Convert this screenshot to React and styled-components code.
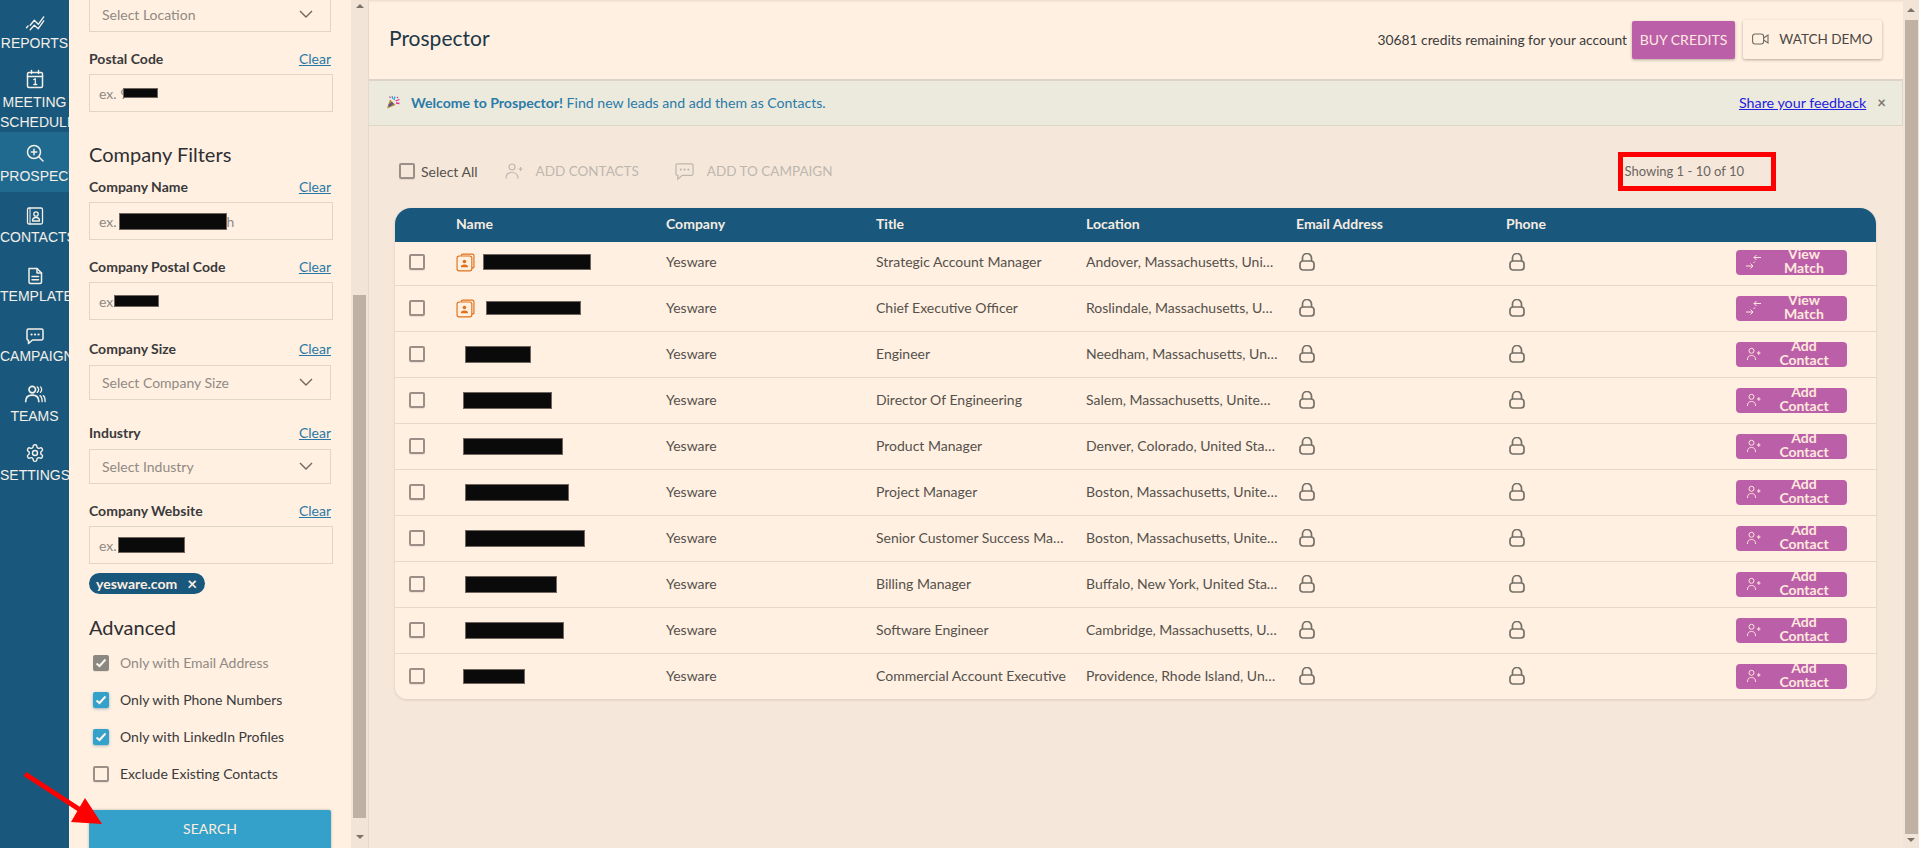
import React from "react";
import styled, { createGlobalStyle } from "styled-components";

const FONT = `"Lato", "Open Sans", "Liberation Sans", sans-serif`;
const CREAM = "#fff0e1";

const Global = createGlobalStyle`
  html, body { margin: 0; padding: 0; height: 100%; overflow: hidden; background: ${CREAM}; }
  body { font-family: ${FONT}; font-size: 14px; color: #3b3b3b; }
  * { box-sizing: border-box; }
`;

const Page = styled.div`
  position: relative;
  display: flex;
  height: 848px;
  width: 1919px;
  overflow: hidden;
`;

/* ---- nav ---- */
const Nav = styled.nav`
  width: 69px;
  flex: none;
  background: #19587c;
  padding-top: 2px;
  overflow: hidden;
`;
const NavItem = styled.a`
  display: flex;
  flex-direction: column;
  align-items: center;
  height: ${(p) => p.$h}px;
  padding-top: ${(p) => p.$pt}px;
  background: ${(p) => (p.$active ? "#206a90" : "transparent")};
  color: #f4efe8;
  overflow: hidden;
  svg { flex: none; margin-bottom: ${(p) => p.$gap}px; }
`;
const NavLabel = styled.span`
  display: block;
  width: 69px;
  font-family: "Liberation Sans", Arial, sans-serif;
  font-size: 14px;
  line-height: 20px;
  text-align: center;
  white-space: normal;
  span { display: block; white-space: nowrap; }
`;

/* ---- filter panel ---- */
const Panel = styled.aside`
  width: 282px;
  flex: none;
  background: ${CREAM};
  overflow: hidden;
  padding: 0 18px 0 20px;
`;
const Form = styled.div`
  margin-top: -3px;
  display: flex;
  flex-direction: column;
`;
const Field = styled.div`
  margin-top: ${(p) => p.$top || 0}px;
`;
const LabelRow = styled.div`
  display: flex;
  justify-content: space-between;
  align-items: center;
  height: 18px;
  padding-bottom: 2px;
  width: 242px;
  margin-bottom: ${(p) => p.$mb || 6}px;
`;
const Label = styled.span`
  font-size: 14px;
  font-weight: 700;
  color: #3a3a3c;
`;
const Clear = styled.a`
  font-size: 14px;
  color: #2b78a6;
  text-decoration: underline;
`;
const InputBox = styled.div`
  display: flex;
  align-items: center;
  width: 244px;
  height: 38px;
  border: 1px solid #e0d5c9;
  padding: 0 9px;
  color: #8f8a84;
  font-size: 14px;
`;
const SelectBox = styled.div`
  display: flex;
  align-items: center;
  justify-content: space-between;
  width: 242px;
  height: 35px;
  border: 1px solid #e0d5c9;
  padding: 0 16px 1px 12px;
  color: #8f8a84;
  font-size: 14px;
`;
const Redact = styled.i`
  display: inline-block;
  flex: none;
  background: #0a0a0a;
  border: 1px solid #6e665f;
  width: ${(p) => p.$w}px;
  height: ${(p) => p.$h}px;
  margin-left: ${(p) => p.$ml || 0}px;
`;
const SectionTitle = styled.h3`
  margin: ${(p) => p.$top}px 0 ${(p) => p.$bottom}px;
  font-size: 20px;
  line-height: 26px;
  font-weight: 400;
  color: #2f2f31;
`;
const Chip = styled.div`
  display: inline-flex;
  align-items: center;
  gap: 10px;
  height: 21px;
  margin-top: 9px;
  padding: 0 8px 0 7px;
  border-radius: 11px;
  background: #19587c;
  color: #ffeee0;
  font-size: 14px;
  font-weight: 700;
  align-self: flex-start;
  white-space: nowrap;
`;
const ChipClose = styled.span`
  font-size: 17px;
  line-height: 17px;
`;
const CheckRow = styled.label`
  display: flex;
  align-items: center;
  gap: 11px;
  height: 37px;
  padding-left: 4px;
  color: ${(p) => (p.$muted ? "#8f8a84" : "#3a3a3c")};
  font-size: 14px;
`;
const Box = styled.span`
  display: inline-flex;
  align-items: center;
  justify-content: center;
  flex: none;
  width: 16px;
  height: 16px;
  border-radius: 2px;
  border: ${(p) => (p.$kind ? "none" : "2px solid #9a9087")};
  background: ${(p) => (p.$kind === "on" ? "#33a1c9" : p.$kind === "off" ? "#8a8880" : "transparent")};
  box-shadow: ${(p) => (p.$kind === "on" ? "0 1px 3px rgba(40,110,150,.45)" : "0 1px 1px rgba(0,0,0,.08)")};
`;
const SearchButton = styled.button`
  width: 242px;
  height: 60px;
  flex: none;
  margin-top: 18px;
  padding: 0 0 23px;
  border: none;
  border-radius: 2px;
  background: #33a1c9;
  color: #ffeee0;
  font-family: ${FONT};
  font-size: 14px;
  box-shadow: 0 0 3px rgba(0,0,0,.25);
`;

/* ---- scrollbars ---- */
const Track = styled.div`
  width: ${(p) => p.$w}px;
  flex: none;
  display: flex;
  flex-direction: column;
  align-items: center;
  background: #f3e4d8;
  height: 848px;
`;
const ArrowCell = styled.div`
  height: ${(p) => p.$h}px;
  flex: none;
  display: flex;
  justify-content: center;
  align-items: ${(p) => (p.$down ? "flex-start" : "center")};
  padding-top: ${(p) => (p.$down ? 4 : 0)}px;
  color: #6f6860;
  font-size: 0;
`;
const Tri = styled.i`
  width: 0;
  height: 0;
  border-left: 4px solid transparent;
  border-right: 4px solid transparent;
  ${(p) => (p.$down ? "border-top: 4px solid #7a7269;" : "border-bottom: 4px solid #7a7269;")}
`;
const Thumb = styled.div`
  width: 13px;
  flex: none;
  height: ${(p) => p.$h}px;
  margin-top: ${(p) => p.$top}px;
  background: #bfb2a5;
`;
const TrackFill = styled.div`
  flex: 1;
`;

/* ---- main ---- */
const Main = styled.main`
  flex: 1;
  min-width: 0;
  display: flex;
  flex-direction: column;
  background: #f6e7db;
  border-left: 1px solid #e6d8cb;
`;
const TopBar = styled.header`
  height: 81px;
  flex: none;
  display: flex;
  align-items: center;
  justify-content: space-between;
  padding: 0 21px 0 20px;
  background: ${CREAM};
  border-bottom: 2px solid #dcd3c9;
  box-shadow: inset 0 3px 3px -2px rgba(0,0,0,.1);
`;
const PageTitle = styled.h1`
  margin: 0 0 4px;
  font-size: 21px;
  font-weight: 400;
  color: #1e3747;
`;
const TopRight = styled.div`
  display: flex;
  align-items: center;
`;
const Credits = styled.span`
  font-size: 13.8px;
  color: #3b3b3b;
  margin: 0 5px 1px 0;
`;
const BuyButton = styled.button`
  height: 38px;
  width: 103px;
  padding: 0 0 1px;
  border: none;
  border-radius: 2px;
  background: #bc5fa9;
  color: #ffe9e0;
  font-family: ${FONT};
  font-size: 14px;
  white-space: nowrap;
  box-shadow: 0 1px 3px rgba(0,0,0,.3);
  margin-right: 8px;
`;
const DemoButton = styled.button`
  height: 39px;
  width: 139px;
  display: flex;
  align-items: center;
  justify-content: center;
  gap: 10px;
  padding: 0 0 2px;
  border: none;
  border-radius: 2px;
  background: ${CREAM};
  color: #4a4642;
  font-family: ${FONT};
  font-size: 13.5px;
  white-space: nowrap;
  box-shadow: 0 1px 3px rgba(0,0,0,.3);
`;
const Banner = styled.div`
  height: 45px;
  flex: none;
  display: flex;
  align-items: center;
  padding: 0 16px 2px 17px;
  background: #ece9dd;
  border-bottom: 1px solid #dcd6cb;
  border-right: 1px solid #dcd6cb;
  color: #2a7ba8;
  font-size: 14.1px;
`;
const BannerText = styled.span`
  margin-left: 11px;
  flex: 1;
  b { font-weight: 700; }
`;
const Feedback = styled.a`
  color: #2222dd;
  font-size: 14.3px;
  text-decoration: underline;
  margin-right: 11px;
`;
const Close = styled.span`
  color: #7d7870;
  font-size: 15px;
  font-weight: 700;
`;
const Content = styled.section`
  flex: 1;
  padding: 0 26px 0 26px;
`;
const Toolbar = styled.div`
  display: flex;
  align-items: center;
  height: 82px;
  padding: 8px 0 0 4px;
`;
const SelectAll = styled.label`
  display: flex;
  align-items: center;
  gap: 6px;
  color: #55514c;
  font-size: 14px;
  margin-right: 27px;
`;
const GhostAction = styled.span`
  display: flex;
  align-items: center;
  gap: 13px;
  color: #bdb7ae;
  font-size: 13.5px;
  margin-right: 36px;
  white-space: nowrap;
`;
const Showing = styled.span`
  margin-left: auto;
  margin-right: 133px;
  color: #6a6660;
  font-size: 13px;
`;
const Table = styled.div`
  width: 1481px;
  background: ${CREAM};
  border-radius: 16px 16px 12px 12px;
  box-shadow: 0 1px 3px rgba(0,0,0,.12);
  overflow: hidden;
`;
const HeadRow = styled.div`
  display: grid;
  grid-template-columns: 61px repeat(6, 210px) 160px;
  align-items: center;
  height: 34px;
  padding-bottom: 3px;
  background: #19587c;
  color: #f6ece2;
  font-size: 14px;
  font-weight: 700;
`;
const Row = styled.div`
  display: grid;
  grid-template-columns: 61px repeat(6, 210px) 160px;
  align-items: center;
  height: ${(p) => (p.$first ? 43 : 46)}px;
  padding-bottom: ${(p) => (p.$first ? 3 : 1)}px;
  border-top: ${(p) => (p.$first ? "none" : "1px solid #e6d8cb")};
  color: #55514c;
  font-size: 14px;
`;
const CheckCell = styled.div`
  padding-left: 14px;
  display: flex;
`;
const NameCell = styled.div`
  display: flex;
  align-items: center;
`;
const TextCell = styled.div`
  padding-right: 18px;
  margin-bottom: 2px;
  white-space: nowrap;
  overflow: hidden;
  text-overflow: ellipsis;
`;
const LockCell = styled.div`
  padding: 0 0 0 3px;
  display: flex;
`;
const ActionCell = styled.div`
  padding-left: 20px;
  display: flex;
`;
const RowButton = styled.button`
  width: 111px;
  height: 25px;
  display: flex;
  align-items: center;
  padding: 0 2px 0 9px;
  border: none;
  border-radius: 4px;
  background: #bc5fa9;
  color: #ffe9dc;
  font-family: ${FONT};
  svg { flex: none; }
`;
const RowButtonText = styled.span`
  flex: 1;
  display: block;
  margin: -3px auto 0;
  padding: 0 12px;
  font-size: 14px;
  line-height: 14px;
  font-weight: 700;
  text-align: center;
`;

/* ---- annotations ---- */
const RedBox = styled.div`
  position: absolute;
  left: 1618px;
  top: 152px;
  width: 158px;
  height: 39px;
  border: 5px solid #ff0000;
  pointer-events: none;
`;
const Overlay = styled.svg`
  position: absolute;
  left: 0;
  top: 760px;
  pointer-events: none;
`;

/* ---- icons ---- */
const stroke = { fill: "none", stroke: "currentColor", strokeWidth: 1.5, strokeLinecap: "round", strokeLinejoin: "round" };
const Ic = ({ size = 20, children, sw }) => (
  <svg width={size} height={size} viewBox="0 0 20 20" {...stroke} strokeWidth={sw || 1.5}>{children}</svg>
);
const IReports = () => (
  <Ic size={20} sw={1.4}>
    <path d="M1.5 14.7 L3 13" />
    <path d="M5.2 12.3 L9.3 7.3 L13.3 11.3 L18.7 3.9" />
    <path d="M5.2 16.7 L9.3 12.3 L13.3 15.7 L18.7 7.9" />
  </Ic>
);
const ICal = () => (
  <Ic>
    <rect x="2.5" y="3.5" width="15" height="15" rx="1.5" /><path d="M2.5 7.5H17.5M6.5 1.5V4.5M13.5 1.5V4.5" />
    <path d="M8.8 10.5 L10.3 9.8 V15.5M8.8 15.5H11.8" strokeWidth="1.3" />
  </Ic>
);
const IZoom = () => (
  <Ic><circle cx="9" cy="9" r="6.5" /><path d="M14 14 L18 18M9 6.3V11.7M6.3 9H11.7" /></Ic>
);
const IContact = () => (
  <Ic sw={1.3}>
    <rect x="2.5" y="2" width="15" height="16" rx="1.5" /><path d="M5 2V18" strokeWidth="1" />
    <circle cx="11" cy="8" r="2.2" /><path d="M7.5 15 C7.5 12 9 11.5 11 11.5 S14.5 12 14.5 15 Z" />
  </Ic>
);
const IDoc = () => (
  <Ic>
    <path d="M4 2.5 H12 L16.5 7 V16 A1.5 1.5 0 0 1 15 17.5 H5.5 A1.5 1.5 0 0 1 4 16 Z" /><path d="M12 2.5V7H16.5M7 10.5H13.5M7 13.8H13.5" />
  </Ic>
);
const IChat = () => (
  <Ic>
    <path d="M3.5 3 H16.5 A1.5 1.5 0 0 1 18 4.5 V12.5 A1.5 1.5 0 0 1 16.5 14 H7.5 L3.5 17.5 V14.2 A1.5 1.5 0 0 1 2 12.5 V4.5 A1.5 1.5 0 0 1 3.5 3 Z" />
    <path d="M6.5 8.5H6.6M10 8.5H10.1M13.5 8.5H13.6" strokeWidth="2.2" />
  </Ic>
);
const ITeam = () => (
  <Ic size={22}>
    <circle cx="7.5" cy="6" r="3" /><path d="M1.5 17 C1.5 12.5 4 11 7.5 11 S13.5 12.5 13.5 17" />
    <path d="M12 3.5 A3 3 0 0 1 12 8.5M15 3.5 A3.5 3.5 0 0 1 15 8.5M14.5 11.5 C16 12.5 16.5 14.5 16.5 17M17.5 11.5 C19 12.5 19.2 14.5 19.2 17" strokeWidth="1.2" />
  </Ic>
);
const IGear = () => (
  <svg width="20" height="20" viewBox="0 0 24 24" {...stroke} strokeWidth="1.7">
    <path d="M12.22 2h-.44a2 2 0 0 0-2 2v.18a2 2 0 0 1-1 1.73l-.43.25a2 2 0 0 1-2 0l-.15-.08a2 2 0 0 0-2.73.73l-.22.38a2 2 0 0 0 .73 2.73l.15.1a2 2 0 0 1 1 1.72v.51a2 2 0 0 1-1 1.74l-.15.09a2 2 0 0 0-.73 2.73l.22.38a2 2 0 0 0 2.73.73l.15-.08a2 2 0 0 1 2 0l.43.25a2 2 0 0 1 1 1.73V20a2 2 0 0 0 2 2h.44a2 2 0 0 0 2-2v-.18a2 2 0 0 1 1-1.73l.43-.25a2 2 0 0 1 2 0l.15.08a2 2 0 0 0 2.73-.73l.22-.39a2 2 0 0 0-.73-2.73l-.15-.08a2 2 0 0 1-1-1.74v-.5a2 2 0 0 1 1-1.74l.15-.09a2 2 0 0 0 .73-2.73l-.22-.38a2 2 0 0 0-2.73-.73l-.15.08a2 2 0 0 1-2 0l-.43-.25a2 2 0 0 1-1-1.73V4a2 2 0 0 0-2-2z" />
    <circle cx="12" cy="12" r="3" />
  </svg>
);
const Chevron = () => (
  <svg width="16" height="10" viewBox="0 0 16 10" fill="none" stroke="#6d6760" strokeWidth="1.4"><path d="M2 2 L8 8 L14 2" /></svg>
);
const Check = () => (
  <svg width="12" height="10" viewBox="0 0 12 10" fill="none" stroke="#fff4ea" strokeWidth="2"><path d="M1.5 5.5 L4.5 8 L10.5 1.5" /></svg>
);
const Lock = () => (
  <svg width="16" height="18" viewBox="0 0 16 18" fill="none" stroke="#757068" strokeWidth="1.7">
    <rect x="1" y="8" width="14" height="9" rx="3" /><path d="M3.5 8 V5 A4.2 4.2 0 0 1 12.5 5 V8" />
  </svg>
);
const MatchGlyph = () => (
  <svg width="18" height="18" viewBox="0 0 18 18" fill="none" stroke="#ffe9dc" strokeWidth="1">
    <path d="M1 13 H8 M5.5 10.5 L8 13 L5.5 15.5" /><path d="M16 4.5 H9 M11.5 2 L9 4.5 L11.5 7" /><path d="M10 8.5 L8.5 10" />
  </svg>
);
const AddGlyph = () => (
  <svg width="18" height="14" viewBox="0 0 18 14" fill="none" stroke="#ffe9dc" strokeWidth="1">
    <circle cx="6.5" cy="3.8" r="2.5" /><path d="M2.5 13 C2.5 9.5 4.2 8.5 6.5 8.5 S10.5 9.5 10.5 13" /><path d="M12 6 H15.5 M13.8 4.2 V7.8" />
  </svg>
);
const PersonAdd = () => (
  <svg width="18" height="18" viewBox="0 0 18 18" fill="none" stroke="#bdb7ae" strokeWidth="1.2">
    <circle cx="7" cy="5" r="3" /><path d="M1 16.5 C1 12 3.5 10.5 7 10.5 S13 12 13 16.5" /><path d="M13.5 7 H17.5 M15.5 5 V9" />
  </svg>
);
const ChatGhost = () => (
  <svg width="19" height="19" viewBox="0 0 20 20" fill="none" stroke="#bdb7ae" strokeWidth="1.3">
    <path d="M2.5 2 H17.5 A1.5 1.5 0 0 1 19 3.5 V12.5 A1.5 1.5 0 0 1 17.5 14 H7.5 L3 18 V14 H2.5 A1.5 1.5 0 0 1 1 12.5 V3.5 A1.5 1.5 0 0 1 2.5 2 Z" />
    <path d="M6 8H6.1M10 8H10.1M14 8H14.1" strokeWidth="2.2" strokeLinecap="round" />
  </svg>
);
const Video = () => (
  <svg width="17" height="12" viewBox="0 0 17 12" fill="none" stroke="#6f6a64" strokeWidth="1.1">
    <rect x="0.6" y="1" width="11" height="10" rx="2.5" /><path d="M11.6 5 L16 2 V10 L11.6 7" />
  </svg>
);
const Cards = () => (
  <svg width="19" height="19" viewBox="0 0 18 18" fill="none" stroke="#e0701a" strokeWidth="1.1">
    <path d="M5 2.6 V2.5 A1.5 1.5 0 0 1 6.5 1 H15.5 A1.5 1.5 0 0 1 17 2.5 V12 A1.5 1.5 0 0 1 15 14" />
    <rect x="1" y="2.8" width="14" height="14.2" rx="2" />
    <circle cx="8" cy="8" r="1.7" fill="#e0701a" stroke="none" /><path d="M4.7 13.5 V12 Q8 9.6 11.3 12 V13.5 Z" fill="#e0701a" stroke="none" />
  </svg>
);
const Party = () => (
  <svg width="14" height="14" viewBox="0 0 14 14">
    <path d="M1 13.5 L4 4.5 L9.5 10 Z" fill="#b58a2c" /><path d="M2.2 10 L6 7 L7.5 9 L3 12 Z" fill="#5b4ea0" />
    <path d="M6 1 L7 4 M9 1.5 L8 5" stroke="#3aa3d8" strokeWidth="1.3" /><path d="M9.5 6 L13.5 4.5 M10 8 L13.5 8.5" stroke="#e0338e" strokeWidth="1.3" />
    <path d="M3.5 1.5 L4.5 3" stroke="#e0338e" strokeWidth="1.2" /><circle cx="11.5" cy="2.5" r=".8" fill="#e0338e" />
  </svg>
);

const navItems = [
  { icon: <IReports />, lines: ["REPORTS"], h: 56, pt: 11, gap: 0 },
  { icon: <ICal />, lines: ["MEETING", "SCHEDULER"], h: 74, pt: 11, gap: 3 },
  { icon: <IZoom />, lines: ["PROSPECTOR"], h: 60, pt: 11, gap: 3, active: true },
  { icon: <IContact />, lines: ["CONTACTS"], h: 63, pt: 14, gap: 1 },
  { icon: <IDoc />, lines: ["TEMPLATES"], h: 60, pt: 11, gap: 0 },
  { icon: <IChat />, lines: ["CAMPAIGNS"], h: 58, pt: 11, gap: 0 },
  { icon: <ITeam />, lines: ["TEAMS"], h: 59, pt: 10, gap: 1 },
  { icon: <IGear />, lines: ["SETTINGS"], h: 60, pt: 11, gap: 2 },
];

const people = [
  { title: "Strategic Account Manager", loc: "Andover, Massachusetts, United States", match: true, ml: 8, w: 108, h: 16 },
  { title: "Chief Executive Officer", loc: "Roslindale, Massachusetts, United States", match: true, ml: 11, w: 95, h: 14 },
  { title: "Engineer", loc: "Needham, Massachusetts, United States", ml: 9, w: 66, h: 17 },
  { title: "Director Of Engineering", loc: "Salem, Massachusetts, United States", ml: 7, w: 89, h: 17 },
  { title: "Product Manager", loc: "Denver, Colorado, United States", ml: 7, w: 100, h: 17 },
  { title: "Project Manager", loc: "Boston, Massachusetts, United States", ml: 9, w: 104, h: 17 },
  { title: "Senior Customer Success Manager", loc: "Boston, Massachusetts, United States", ml: 9, w: 120, h: 17 },
  { title: "Billing Manager", loc: "Buffalo, New York, United States", ml: 9, w: 92, h: 17 },
  { title: "Software Engineer", loc: "Cambridge, Massachusetts, United States", ml: 9, w: 99, h: 17 },
  { title: "Commercial Account Executive", loc: "Providence, Rhode Island, United States", ml: 7, w: 62, h: 15 },
];

const Scrollbar = ({ w, upH, top, thumb, downH }) => (
  <Track $w={w}>
    <ArrowCell $h={upH}><Tri /></ArrowCell>
    <Thumb $top={top} $h={thumb} />
    <TrackFill />
    <ArrowCell $h={downH} $down><Tri $down /></ArrowCell>
  </Track>
);

const FilterField = ({ label, top, children, mb }) => (
  <Field $top={top}>
    <LabelRow $mb={mb}><Label>{label}</Label><Clear>Clear</Clear></LabelRow>
    {children}
  </Field>
);

export default function App() {
  return (
    <Page>
      <Global />
      <Nav>
        {navItems.map((n) => (
          <NavItem key={n.lines[0]} $h={n.h} $pt={n.pt} $gap={n.gap} $active={n.active}>
            {n.icon}
            <NavLabel>{n.lines.map((l) => <span key={l}>{l}</span>)}</NavLabel>
          </NavItem>
        ))}
      </Nav>

      <Panel>
        <Form>
          <SelectBox>Select Location<Chevron /></SelectBox>
          <FilterField label="Postal Code" top={18}>
            <InputBox>ex. 9<Redact $ml={-5} $w={35} $h={10} /></InputBox>
          </FilterField>
          <SectionTitle $top={29} $bottom={11}>Company Filters</SectionTitle>
          <FilterField label="Company Name">
            <InputBox>ex.<Redact $ml={2} $w={108} $h={17} />h</InputBox>
          </FilterField>
          <FilterField label="Company Postal Code" top={18}>
            <InputBox>ex.<Redact $ml={-3} $w={45} $h={12} /></InputBox>
          </FilterField>
          <FilterField label="Company Size" top={20} mb={7}>
            <SelectBox>Select Company Size<Chevron /></SelectBox>
          </FilterField>
          <FilterField label="Industry" top={24} mb={7}>
            <SelectBox>Select Industry<Chevron /></SelectBox>
          </FilterField>
          <FilterField label="Company Website" top={18}>
            <InputBox>ex.<Redact $ml={1} $w={67} $h={16} /></InputBox>
          </FilterField>
          <Chip>yesware.com<ChipClose>×</ChipClose></Chip>
          <SectionTitle $top={20} $bottom={4}>Advanced</SectionTitle>
          <CheckRow $muted><Box $kind="off"><Check /></Box>Only with Email Address</CheckRow>
          <CheckRow><Box $kind="on"><Check /></Box>Only with Phone Numbers</CheckRow>
          <CheckRow><Box $kind="on"><Check /></Box>Only with LinkedIn Profiles</CheckRow>
          <CheckRow><Box />Exclude Existing Contacts</CheckRow>
          <SearchButton>SEARCH</SearchButton>
        </Form>
      </Panel>
      <Scrollbar w={17} upH={12} top={283} thumb={523} downH={17} />

      <Main>
        <TopBar>
          <PageTitle>Prospector</PageTitle>
          <TopRight>
            <Credits>30681 credits remaining for your account</Credits>
            <BuyButton>BUY CREDITS</BuyButton>
            <DemoButton><Video />WATCH DEMO</DemoButton>
          </TopRight>
        </TopBar>
        <Banner>
          <Party />
          <BannerText><b>Welcome to Prospector!</b> Find new leads and add them as Contacts.</BannerText>
          <Feedback>Share your feedback</Feedback>
          <Close>×</Close>
        </Banner>
        <Content>
          <Toolbar>
            <SelectAll><Box />Select All</SelectAll>
            <GhostAction><PersonAdd />ADD CONTACTS</GhostAction>
            <GhostAction><ChatGhost />ADD TO CAMPAIGN</GhostAction>
            <Showing>Showing 1 - 10 of 10</Showing>
          </Toolbar>
          <Table>
            <HeadRow>
              <span />
              <span>Name</span><span>Company</span><span>Title</span><span>Location</span><span>Email Address</span><span>Phone</span>
              <span />
            </HeadRow>
            {people.map((p, i) => (
              <Row key={p.title + i} $first={i === 0}>
                <CheckCell><Box /></CheckCell>
                <NameCell>
                  {p.match && <Cards />}
                  <Redact $ml={p.ml} $w={p.w} $h={p.h} />
                </NameCell>
                <TextCell>Yesware</TextCell>
                <TextCell>{p.title}</TextCell>
                <TextCell>{p.loc}</TextCell>
                <LockCell><Lock /></LockCell>
                <LockCell><Lock /></LockCell>
                <ActionCell>
                  <RowButton>
                    {p.match ? <MatchGlyph /> : <AddGlyph />}
                    <RowButtonText>{p.match ? "View Match" : "Add Contact"}</RowButtonText>
                  </RowButton>
                </ActionCell>
              </Row>
            ))}
          </Table>
        </Content>
      </Main>
      <Scrollbar w={16} upH={20} top={0} thumb={814} downH={14} />

      <RedBox />
      <Overlay width="120" height="80" viewBox="0 760 120 80">
        <path d="M25 774 L88 815" stroke="#ff0000" strokeWidth="5" />
        <polygon points="102,824 85,798 71,822" fill="#ff0000" />
      </Overlay>
    </Page>
  );
}
